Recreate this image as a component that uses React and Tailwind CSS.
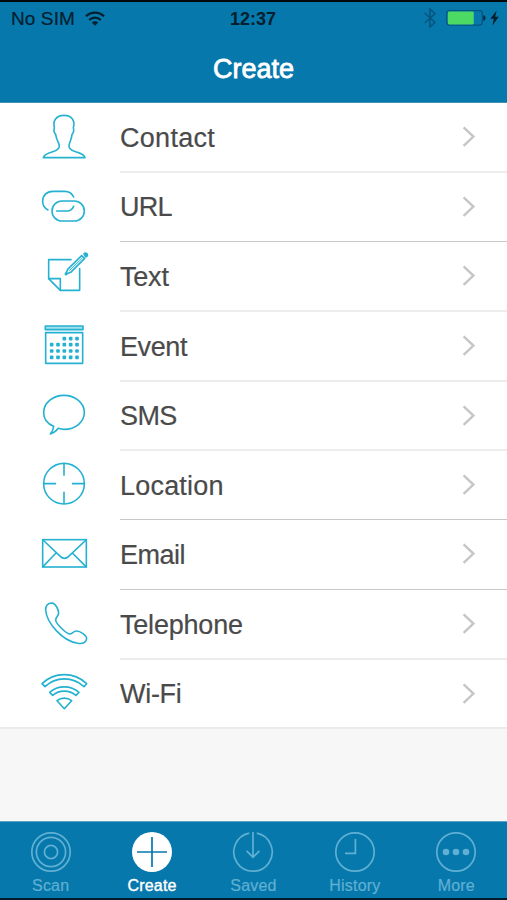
import React from 'react';

// Line icons for the list rows, all drawn on the same 204 x 207 grid
const RowIcon = ({ viewBox, children }) => (
  <svg
    viewBox={viewBox}
    className="w-[68px] h-[69px] shrink-0 text-[#25b1d1]"
    fill="none"
    stroke="currentColor"
    strokeWidth="4.8"
    strokeLinejoin="round"
    strokeLinecap="round"
  >
    {children}
  </svg>
);

const ContactIcon = () => (
  <RowIcon viewBox="30 9 204 207">
    <path d="M70 173 C71 164 84 159 98 155 C112 151 118 147 118 138 C118 128 109 121 107 103 C103 99 101 90 103 84 C98 63 108 46 132 46 C156 46 166 62 160 84 C163 90 160 100 156 103 C155 120 147 128 147 138 C147 147 153 151 167 155 C182 159 193 164 195 173 Z" />
  </RowIcon>
);

const UrlIcon = () => (
  <RowIcon viewBox="30 219 204 207">
    <path d="M84 330 C74 325 68 316 68 304 C68 286 80 274 98 274 H134 C147 274 156 280 161 291" />
    <rect x="96" y="303" width="97" height="60" rx="30" />
    <path d="M110 333 H141 C150 333 157 328 161 319" />
  </RowIcon>
);

const TextIcon = () => (
  <RowIcon viewBox="30 6 204 207">
    <path d="M153 59 H86 V116 L121 151 H179 V86" />
    <path d="M86 116 H121 V151" />
    <path d="M137 103 L143 88 L185 47 L194 55 L152 97 Z" />
    <path d="M149 91 L187 54" strokeWidth="3" />
    <path d="M192 42 L196 39 Q203 40 202 47 L198 51 Z" fill="currentColor" />
    <circle cx="138" cy="102" r="2" fill="currentColor" />
  </RowIcon>
);

const EVENT_DOTS = [
  [133, 296], [152, 296], [171, 296],
  [95, 314], [114, 314], [133, 314], [152, 314], [171, 314],
  [95, 333], [114, 333], [133, 333], [152, 333], [171, 333],
  [95, 352], [114, 352], [133, 352], [152, 352], [171, 352],
];

const EventIcon = () => (
  <RowIcon viewBox="30 216 204 207">
    <rect x="76" y="258" width="113" height="11" fill="#a5dfec" />
    <rect x="77" y="278" width="111" height="92" />
    {EVENT_DOTS.map(([x, y]) => (
      <rect key={`${x}-${y}`} x={x - 5.5} y={y - 5.5} width="11" height="11" rx="3" fill="currentColor" stroke="none" />
    ))}
  </RowIcon>
);

const SmsIcon = () => (
  <RowIcon viewBox="30 6 204 207">
    <path d="M101 139 C82 131 71 116 71 98 C71 69 98 46 132 46 C166 46 193 69 193 97 C193 127 166 148 132 148 C126 148 121 147 115 145 C109 153 102 159 91 162 C97 155 101 147 101 139 Z" />
  </RowIcon>
);

const LocationIcon = () => (
  <RowIcon viewBox="30 213 204 207">
    <circle cx="132" cy="311" r="61" />
    <path d="M132 251 V287 M132 335 V371 M72 311 H108 M156 311 H192" strokeLinecap="butt" />
  </RowIcon>
);

const EmailIcon = () => (
  <RowIcon viewBox="30 0 204 207">
    <rect x="68" y="59" width="131" height="82" strokeLinejoin="miter" />
    <path d="M69 60 L121 109 C129 117 138 117 146 109 L198 60 M69 140 L108 99 M198 140 L157 99" />
  </RowIcon>
);

const PhoneIcon = () => (
  <RowIcon viewBox="30 210 204 207">
    <path d="M96 249 C84 249 77 257 77 270 C80 309 127 363 173 370 C187 372 198 367 200 356 C200 346 181 333 169 333 C160 333 157 342 149 342 C138 341 108 311 107 300 C107 291 116 288 116 279 C115 268 107 250 96 249 Z" />
  </RowIcon>
);

const WifiIcon = () => (
  <RowIcon viewBox="30 30 204 207">
    <path d="M66 101 C103 65 162 65 200 101 L192 110 C158 79 107 79 75 110 Z" />
    <path d="M89 127 C113 105 152 105 177 127 L168 136 C147 119 118 119 98 136 Z" />
    <path d="M111 152 C123 142 142 142 155 152 L133 176 Z" />
  </RowIcon>
);

const THIN = 'border-b border-[#c8c8c8]';
const SOFT = 'border-b-2 border-[#ededed]';

const ROWS = [
  { label: 'Contact',   Icon: ContactIcon,  height: 'h-[70px]', line: SOFT, text: 'leading-[71px] tracking-[0.3px]' },
  { label: 'URL',       Icon: UrlIcon,      height: 'h-[69px]', line: THIN, text: 'leading-[69px] tracking-[-0.7px]' },
  { label: 'Text',      Icon: TextIcon,     height: 'h-[70px]', line: SOFT, text: 'leading-[71px] tracking-[-0.2px]' },
  { label: 'Event',     Icon: EventIcon,    height: 'h-[70px]', line: SOFT, text: 'leading-[71px] tracking-[-0.4px]' },
  { label: 'SMS',       Icon: SmsIcon,      height: 'h-[69px]', line: SOFT, text: 'leading-[69px] tracking-[-0.6px]' },
  { label: 'Location',  Icon: LocationIcon, height: 'h-[69px]', line: THIN, text: 'leading-[71px] tracking-[0.2px]' },
  { label: 'Email',     Icon: EmailIcon,    height: 'h-[70px]', line: THIN, text: 'leading-[71px] tracking-[-0.5px]' },
  { label: 'Telephone', Icon: PhoneIcon,    height: 'h-[70px]', line: SOFT, text: 'leading-[71px] tracking-[-0.2px]' },
];

const Chevron = () => (
  <svg viewBox="0 0 14 22" className="w-[14px] h-[22px] mr-[31px] mt-[23px] shrink-0" fill="none" stroke="#c6c6c9" strokeWidth="2.4">
    <path d="M1.6 1.4 L11.4 10.6 L1.6 19.8" />
  </svg>
);

const Row = ({ label, Icon, height, line, text }) => (
  <li className={`${height} flex pl-[30px]`}>
    <Icon />
    <div className={`flex-1 ml-[22px] flex justify-between items-start ${line}`}>
      <span className={`text-[27px] text-[#4a4a4a] [-webkit-text-stroke:0.2px_#4a4a4a] ${text}`}>{label}</span>
      <Chevron />
    </div>
  </li>
);

const TabIcon = ({ children }) => (
  <svg viewBox="0 0 42 42" className="w-[42px] h-[42px]" fill="none" stroke="currentColor" strokeWidth="1.7">
    {children}
  </svg>
);

const TABS = [
  {
    label: 'Scan',
    icon: <TabIcon><circle cx="21" cy="21" r="19.2" /><circle cx="21" cy="21" r="14.6" /><circle cx="21" cy="21" r="6.6" /></TabIcon>,
  },
  {
    label: 'Create',
    active: true,
    icon: (
      <TabIcon>
        <circle cx="21" cy="21" r="20" fill="white" stroke="none" />
        <path d="M21 6 V36 M6 21 H36" stroke="#0778ac" />
      </TabIcon>
    ),
  },
  {
    label: 'Saved',
    icon: <TabIcon><path d="M17.2 2.2 A19.2 19.2 0 1 0 24.8 2.2" /><path d="M21 1 V26 M14.6 19.8 L21 26.2 L27.4 19.8" /></TabIcon>,
  },
  {
    label: 'History',
    icon: <TabIcon><circle cx="21" cy="21" r="19.2" /><path d="M21.4 8 V22.4 H11" /></TabIcon>,
  },
  {
    label: 'More',
    icon: (
      <TabIcon>
        <circle cx="21" cy="21" r="19.2" />
        <g fill="currentColor" stroke="none">
          <circle cx="11" cy="21" r="3.3" /><circle cx="21" cy="21" r="3.3" /><circle cx="31" cy="21" r="3.3" />
        </g>
      </TabIcon>
    ),
  },
];

const StatusBar = () => (
  <div className="h-[34px] grid grid-cols-[1fr_46px_1fr] items-center pl-[11px] pr-[8px] text-[#04202e]">
    <div className="flex items-center gap-[10px]">
      <span className="text-[19px] leading-[32px] tracking-[0.1px] [-webkit-text-stroke:0.2px_#04202e]">No SIM</span>
      <svg viewBox="0 0 20 15" className="w-[20px] h-[15px] mb-[2px]" fill="none" stroke="currentColor" strokeWidth="2.3">
        <path d="M1 5.3 C6 0.4 14 0.4 19 5.3" />
        <path d="M4.2 9 C7.5 5.8 12.5 5.8 15.8 9" />
        <path d="M6.8 11.4 C8.6 9.7 11.4 9.7 13.2 11.4 L10 14.8 Z" fill="currentColor" stroke="none" />
      </svg>
    </div>
    <span className="-ml-[2px] text-[18px] leading-[32px] font-bold">12:37</span>
    <div className="flex items-center justify-end pb-[2px]">
      <svg viewBox="0 0 12 20" className="w-[12px] h-[20px] mr-[10px] text-[#055680]" fill="none" stroke="currentColor" strokeWidth="1.6">
        <path d="M0.8 5 L11 14.4 L6 19 V1 L11 5.6 L0.8 15" />
      </svg>
      <svg viewBox="0 0 40 16" className="w-[40px] h-[16px] mr-[4px]">
        <rect x="0.7" y="0.7" width="35.6" height="14.4" rx="2.8" fill="none" stroke="#055680" strokeWidth="1.3" />
        <rect x="1.8" y="1.6" width="26" height="12.8" rx="1.4" fill="#4cd964" />
        <path d="M37.2 5 Q39.6 5.6 39.6 8 Q39.6 10.4 37.2 11 Z" fill="#04304a" />
      </svg>
      <svg viewBox="0 0 9 16" className="w-[9px] h-[16px]" fill="#04202e">
        <path d="M6.6 0.6 L0.4 8.8 H3.8 L2.4 15.4 L8.8 6.8 H5.2 Z" />
      </svg>
    </div>
  </div>
);

const App = () => (
  <div className="w-[507px] h-[900px] flex flex-col bg-[#f7f7f7] overflow-hidden font-['Liberation_Sans',Arial,sans-serif]">

    {/* HEADER */}
    <header className="h-[103px] shrink-0 bg-[#0778ac] border-t-2 border-t-[#02080c] border-b border-b-[#4191b5]">
      <StatusBar />
      <h1 className="text-center text-white text-[27px] leading-[66px] [-webkit-text-stroke:0.8px_white]">Create</h1>
    </header>

    {/* LIST */}
    <main className="flex-1">
      <ul className="bg-white">
        {ROWS.map((row) => <Row key={row.label} {...row} />)}
      </ul>
      <ul className="bg-white border-b-2 border-[#ebebeb]">
        <Row label="Wi-Fi" Icon={WifiIcon} height="h-[67px]" line="" text="leading-[69px] tracking-[-0.3px]" />
      </ul>
    </main>

    {/* TAB BAR */}
    <nav className="h-[79px] shrink-0 grid grid-cols-5 bg-[#0778ac] border-t border-t-[#5ba3c4] border-b-2 border-b-[#031c2c]">
      {TABS.map((tab) => (
        <div key={tab.label} className={`flex flex-col items-center pt-[9px] ${tab.active ? 'text-white' : 'text-[#5fb0d3]'}`}>
          {tab.icon}
          <span className={`text-[16px] leading-[18px] mt-[4px] tracking-[0.2px] ${tab.active ? '[-webkit-text-stroke:0.4px_white]' : '[-webkit-text-stroke:0.2px_#5fb0d3]'}`}>
            {tab.label}
          </span>
        </div>
      ))}
    </nav>
  </div>
);

export default App;
